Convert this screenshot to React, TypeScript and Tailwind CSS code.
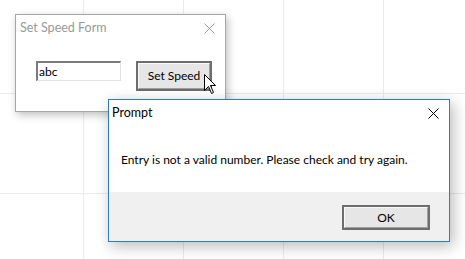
import React from 'react';

const font = { fontFamily: 'Lato, "Noto Sans", sans-serif' };

const CloseIcon = ({ color }: { color: string }) => (
  <svg width="11" height="11" viewBox="0 0 11 11">
    <path d="M0.5 0.5 L10.5 10.5 M10.5 0.5 L0.5 10.5" stroke={color} strokeWidth="1" fill="none" />
  </svg>
);

const Cursor = () => (
  <svg width="13" height="21" viewBox="0 0 13 21" className="absolute left-[204px] top-[74px]">
    <path
      d="M0.5 0.5 L0.5 16.5 L4.5 12.5 L7.5 19.5 L9.5 18.5 L6.5 11.5 L11.5 11.5 Z"
      fill="#fff"
      stroke="#000"
      strokeWidth="1"
      strokeLinejoin="miter"
    />
  </svg>
);

export default function App() {
  return (
    <div className="relative w-[465px] h-[259px] overflow-hidden bg-white text-[12px]" style={font}>
      {/* desktop grid */}
      <div className="absolute inset-0 bg-[linear-gradient(to_right,#ebebeb_1px,transparent_1px),linear-gradient(to_bottom,#ebebeb_1px,transparent_1px)] bg-[size:100px_100px] bg-[position:83px_93px]" />

      {/* Set Speed Form (inactive) */}
      <div className="absolute left-[15px] top-[14px] w-[211px] h-[98px] bg-white border border-[#a6a6a6] shadow-[2px_3px_8px_rgba(0,0,0,0.25)] flex flex-col">
        <div className="flex items-center justify-between h-[26px] pl-[4px] pr-[10px]">
          <span className="text-[#999999] text-[12.5px]">Set Speed Form</span>
          <CloseIcon color="#9a9a9a" />
        </div>
        <div className="flex items-start pl-[20px] pt-[20px] gap-[15px]">
          <div className="w-[85px] h-[20px] border border-[#e3e3e3] border-t-[#7a7a7a] border-l-[#7a7a7a] border-t-2 border-l-2 flex items-center pl-[1px] leading-none text-black">
            abc
          </div>
          <div className="w-[76px] h-[30px] border-2 border-[#6d6d6d] bg-[#e6e6e6] flex items-center justify-center text-black">
            <div className="w-full h-full border border-[#f8f8f8] border-r-[#a0a0a0] border-b-[#a0a0a0] flex items-center justify-center">
              Set Speed
            </div>
          </div>
        </div>
      </div>

      <Cursor />

      {/* Prompt dialog (active) */}
      <div className="absolute left-[108px] top-[99px] w-[342px] h-[143px] bg-white border border-[#2b7bd4] shadow-[3px_4px_14px_rgba(0,0,0,0.28)] flex flex-col">
        <div className="flex items-center justify-between h-[26px] pl-[3px] pr-[10px]">
          <span className="text-black text-[12.5px]">Prompt</span>
          <CloseIcon color="#000" />
        </div>
        <div className="flex-1 flex items-center pl-[12px] pt-[1px] text-black">
          Entry is not a valid number. Please check and try again.
        </div>
        <div className="h-[49px] bg-[#f0f0f0] flex items-start justify-end pr-[19px] pt-[13px]">
          <div className="w-[88px] h-[25px] border-2 border-[#6d6d6d] bg-[#e6e6e6]">
            <div className="w-full h-full border border-[#f8f8f8] border-r-[#a0a0a0] border-b-[#a0a0a0] flex items-center justify-center text-black">
              OK
            </div>
          </div>
        </div>
      </div>
    </div>
  );
}
